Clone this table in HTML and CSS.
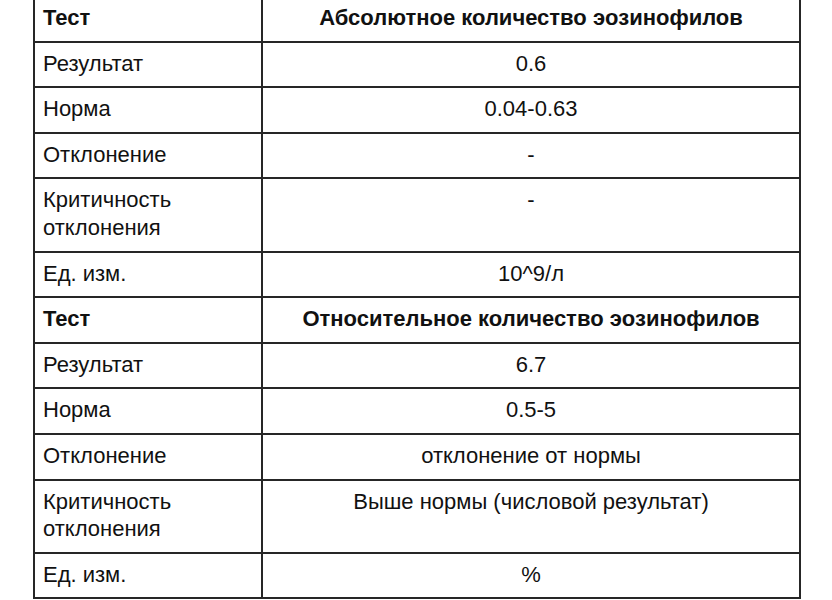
FILE: index.html
```html
<!DOCTYPE html>
<html lang="ru">
<head>
<meta charset="utf-8">
<link rel="stylesheet" href="styles.css">
</head>
<body>
<table class="lab">
  <colgroup><col class="c-label"><col class="c-value"></colgroup>
  <tbody>
    <tr class="head"><td>Тест</td><td class="val">Абсолютное количество эозинофилов</td></tr>
    <tr><td>Результат</td><td class="val">0.6</td></tr>
    <tr><td>Норма</td><td class="val">0.04-0.63</td></tr>
    <tr><td>Отклонение</td><td class="val">-</td></tr>
    <tr><td>Критичность<br>отклонения</td><td class="val">-</td></tr>
    <tr><td>Ед. изм.</td><td class="val">10^9/л</td></tr>
    <tr class="head"><td>Тест</td><td class="val">Относительное количество эозинофилов</td></tr>
    <tr><td>Результат</td><td class="val">6.7</td></tr>
    <tr><td>Норма</td><td class="val">0.5-5</td></tr>
    <tr><td>Отклонение</td><td class="val">отклонение от нормы</td></tr>
    <tr><td>Критичность<br>отклонения</td><td class="val">Выше нормы (числовой результат)</td></tr>
    <tr><td>Ед. изм.</td><td class="val">%</td></tr>
  </tbody>
</table>
</body>
</html>
```
FILE: styles.css
```css
html, body {
  margin: 0;
  padding: 0;
  background: #fff;
}
body {
  font-family: "Liberation Sans", Arial, sans-serif;
  font-size: 22px;
  line-height: 27.6px;
  color: #111;
}
.lab {
  border-collapse: collapse;
  width: 768px;
  margin: -5px 0 0 33px;
  table-layout: fixed;
}
.c-label { width: 228px; }
.lab td {
  border: 2px solid #262626;
  padding: 7px 8px 9px 8px;
  vertical-align: top;
  text-align: left;
}
.lab td.val {
  text-align: center;
}
.lab tr.head td {
  font-weight: bold;
}
```
